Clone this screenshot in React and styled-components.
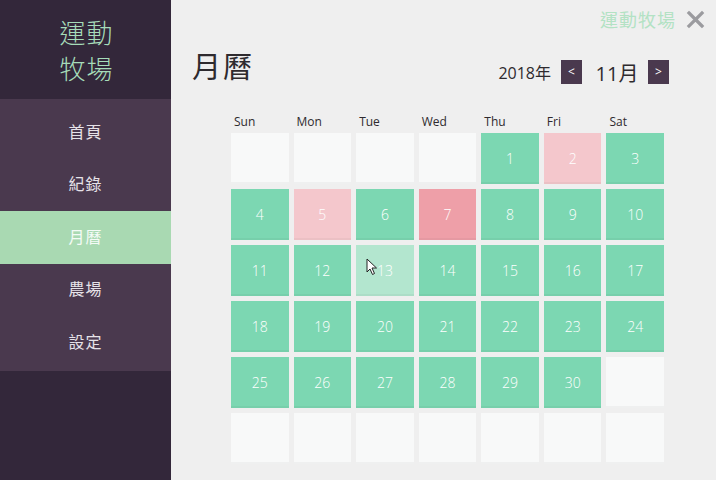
import React from "react";
import styled, { createGlobalStyle } from "styled-components";

const Global = createGlobalStyle`
  html, body { margin: 0; padding: 0; }
  body { font-family: "Open Sans", "Noto Sans CJK TC", sans-serif; background: #efefef; }
`;

const Page = styled.div`
  display: flex;
  width: 716px;
  height: 480px;
  overflow: hidden;
`;

const Sidebar = styled.aside`
  width: 171px;
  flex: none;
  display: flex;
  flex-direction: column;
  background: #33273a;
`;

const Logo = styled.div`
  height: 99px;
  display: flex;
  flex-direction: column;
  align-items: center;
  justify-content: center;
  font-family: "Noto Sans CJK TC", serif;
  font-size: 26px;
  line-height: 36px;
  letter-spacing: 1px;
  color: #a6dcb9;
  font-weight: 300;
  padding-left: 2px;
`;

const Menu = styled.nav`
  background: #4a394e;
  padding: 7px 0 2px;
  display: flex;
  flex-direction: column;
`;

const MenuItem = styled.div`
  height: 52.5px;
  display: flex;
  align-items: center;
  justify-content: center;
  padding-bottom: 3px;
  box-sizing: border-box;
  font-family: "Noto Sans CJK TC", sans-serif;
  font-size: 16px;
  letter-spacing: 1px;
  color: ${(p) => (p.$active ? "#f4fbf6" : "#e6e2e8")};
  background: ${(p) => (p.$active ? "#a9d9b2" : "transparent")};
`;

const Main = styled.main`
  flex: 1;
  background: #efefef;
  display: flex;
  flex-direction: column;
`;

const TopBar = styled.div`
  height: 38px;
  display: flex;
  justify-content: flex-end;
  align-items: center;
  gap: 10px;
  padding: 0 11px 0 0;
`;

const Brand = styled.span`
  font-family: "Noto Sans CJK TC", serif;
  font-size: 18px;
  color: #b3e2c4;
  letter-spacing: 1px;
`;

const HeaderRow = styled.div`
  display: flex;
  align-items: center;
  justify-content: space-between;
  padding: 0 47px 0 21px;
  height: 60px;
`;

const Title = styled.h1`
  margin: 0;
  font-family: "Noto Sans CJK TC", sans-serif;
  font-weight: 400;
  font-size: 29px;
  color: #2e2a2e;
  letter-spacing: 2px;
  position: relative;
  top: -3px;
`;

const DateNav = styled.div`
  display: flex;
  align-items: center;
  position: relative;
  top: 4px;
`;

const Year = styled.span`
  font-family: "Open Sans", "Noto Sans CJK TC", sans-serif;
  font-size: 16px;
  color: #2e2a2e;
  margin-right: 10px;
`;

const Month = styled.span`
  font-family: "Open Sans", "Noto Sans CJK TC", sans-serif;
  font-size: 20px;
  color: #2e2a2e;
  width: 66px;
  text-align: center;
  padding-left: 4px;
  box-sizing: border-box;
`;

const NavBtn = styled.button`
  width: 21px;
  height: 24px;
  border: none;
  padding: 0;
  background: #4a394e;
  color: #fff;
  font-family: "Open Sans", sans-serif;
  font-size: 12px;
  line-height: 24px;
  cursor: pointer;
`;

const Calendar = styled.section`
  margin: 11px 0 0 60px;
  width: 433px;
`;

const Weekdays = styled.div`
  display: grid;
  grid-template-columns: repeat(7, 1fr);
  column-gap: 5px;
  height: 24px;
  align-items: center;
`;

const Weekday = styled.span`
  font-family: "Open Sans", sans-serif;
  font-size: 12px;
  color: #2e2a2e;
  padding-left: 3px;
`;

const Grid = styled.div`
  display: grid;
  grid-template-columns: repeat(7, 1fr);
  grid-auto-rows: 51px;
  column-gap: 5px;
  row-gap: 5px;
`;

const colors = {
  green: "#7cd7b2",
  pink: "#f4c7cc",
  red: "#ee9fa8",
  hover: "#b3e6cf",
  empty: "#f8f9f9",
};

const Cell = styled.div`
  position: relative;
  display: flex;
  align-items: center;
  justify-content: center;
  background: ${(p) => colors[p.$kind]};
  box-shadow: inset 0 -2px 0 rgba(0, 0, 0, 0.035);
  font-family: "Open Sans", sans-serif;
  font-size: 14px;
  font-weight: 300;
  color: #ffffff;
`;

const Cursor = styled.svg`
  position: absolute;
  left: 10px;
  top: 13px;
`;

const days = (() => {
  const cells = [];
  for (let i = 0; i < 4; i++) cells.push({ kind: "empty" });
  for (let d = 1; d <= 30; d++) {
    let kind = "green";
    if (d === 2 || d === 5) kind = "pink";
    if (d === 7) kind = "red";
    if (d === 13) kind = "hover";
    cells.push({ kind, d });
  }
  while (cells.length < 42) cells.push({ kind: "empty" });
  return cells;
})();

const menu = ["首頁", "紀錄", "月曆", "農場", "設定"];
const weekdays = ["Sun", "Mon", "Tue", "Wed", "Thu", "Fri", "Sat"];

export default function App() {
  return (
    <Page>
      <Global />
      <Sidebar>
        <Logo>
          <span>運動</span>
          <span>牧場</span>
        </Logo>
        <Menu>
          {menu.map((m) => (
            <MenuItem key={m} $active={m === "月曆"}>
              {m}
            </MenuItem>
          ))}
        </Menu>
      </Sidebar>
      <Main>
        <TopBar>
          <Brand>運動牧場</Brand>
          <svg width="19" height="19" viewBox="0 0 19 19">
            <path d="M3 3 L16 16 M16 3 L3 16" stroke="#9b9b9f" strokeWidth="3.2" strokeLinecap="square" />
          </svg>
        </TopBar>
        <HeaderRow>
          <Title>月曆</Title>
          <DateNav>
            <Year>2018年</Year>
            <NavBtn>&lt;</NavBtn>
            <Month>11月</Month>
            <NavBtn>&gt;</NavBtn>
          </DateNav>
        </HeaderRow>
        <Calendar>
          <Weekdays>
            {weekdays.map((w) => (
              <Weekday key={w}>{w}</Weekday>
            ))}
          </Weekdays>
          <Grid>
            {days.map((c, i) => (
              <Cell key={i} $kind={c.kind}>
                {c.d}
                {c.d === 13 && (
                  <Cursor width="12" height="18" viewBox="0 0 12 18">
                    <path d="M1 1 L1 14 L4 11 L6.5 16.5 L8.5 15.5 L6 10 L10.5 10 Z" fill="#fff" stroke="#222" strokeWidth="1" strokeLinejoin="round" />
                  </Cursor>
                )}
              </Cell>
            ))}
          </Grid>
        </Calendar>
      </Main>
    </Page>
  );
}
